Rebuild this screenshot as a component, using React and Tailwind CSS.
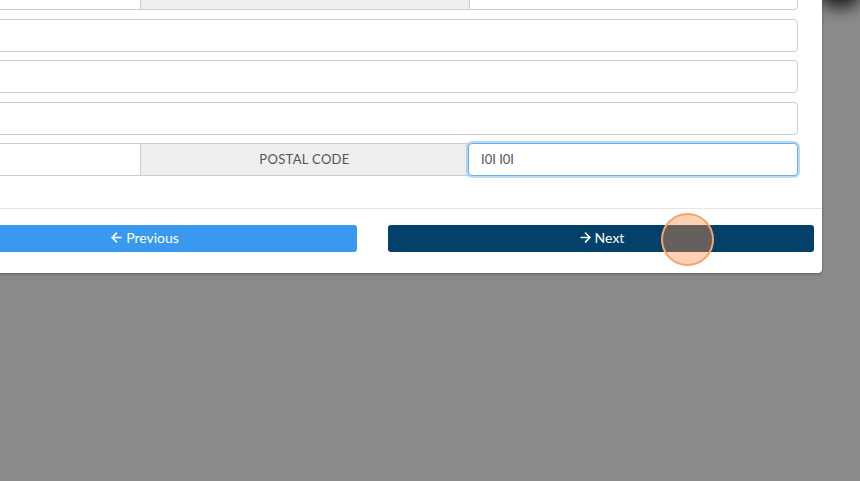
import React from 'react'
import { ArrowLeft, ArrowRight } from 'lucide-react'

const FONT = { fontFamily: 'Lato, "Open Sans", "Liberation Sans", sans-serif' }

function Field({ value = '', focused = false }) {
  return (
    <div
      className={`h-[33px] bg-white rounded-r-[4px] flex items-center px-3 text-[13px] text-[#555] ${
        focused
          ? 'border border-[#66afe9] shadow-[0_0_0_2px_rgba(102,175,233,0.45)] rounded-[4px]'
          : 'border border-[#cccccc]'
      }`}
    >
      {value}
    </div>
  )
}

function Label({ text = '' }) {
  return (
    <div className="h-[33px] bg-[#eeeeee] border-y border-l border-[#cccccc] flex items-center justify-center text-[13px] text-[#555] tracking-wide">
      {text}
    </div>
  )
}

export default function App() {
  return (
    <div className="relative h-[481px] w-[860px] overflow-hidden bg-[#8a8a8a]" style={FONT}>
      {/* blurred close button peeking at top right */}
      <div className="absolute left-[818px] top-[-30px] h-[38px] w-[44px] rounded-full bg-[#1e1e1e] blur-[8px]" />

      {/* Modal */}
      <div className="relative ml-[-80px] mt-[-40px] w-[902px] bg-white rounded-b-[4px] shadow-[0_1px_3px_rgba(0,0,0,0.35)]">
        {/* Form rows */}
        <div className="pl-[70px] pr-[24px] pt-[17px] pb-[32px] flex flex-col gap-[8.5px]">
          <div className="grid grid-cols-[150px_329px_1fr]">
            <div className="h-[33px] border border-r-0 border-[#cccccc] bg-white" />
            <Label />
            <Field />
          </div>
          <div className="h-[33px] border border-[#cccccc] rounded-[4px]" />
          <div className="h-[33px] border border-[#cccccc] rounded-[4px]" />
          <div className="h-[33px] border border-[#cccccc] rounded-[4px]" />
          <div className="grid grid-cols-[150px_328px_1fr]">
            <div className="h-[33px] border border-r-0 border-[#cccccc] bg-white" />
            <Label text="POSTAL CODE" />
            <Field value="I0I I0I" focused />
          </div>
        </div>

        {/* Footer */}
        <div className="border-t border-[#e5e5e5] pt-[16px] pb-[21px] pl-[11px] pr-[8px] grid grid-cols-2 gap-[31px]">
          <button className="h-[27px] pb-[2px] rounded-[3px] bg-[#3899ee] text-white text-[14px] flex items-center justify-center gap-[2px]">
            <ArrowLeft size={15} strokeWidth={2.5} /> Previous
          </button>
          <button className="h-[27px] pb-[2px] rounded-[3px] bg-[#03416b] text-white text-[14px] flex items-center justify-center gap-[2px]">
            <ArrowRight size={15} strokeWidth={2.5} /> Next
          </button>
        </div>
      </div>

      {/* click indicator */}
      <div className="absolute left-[661px] top-[213px] h-[53px] w-[53px] rounded-full border-2 border-[#f4a56c] bg-[rgba(255,140,70,0.4)]" />
    </div>
  )
}
